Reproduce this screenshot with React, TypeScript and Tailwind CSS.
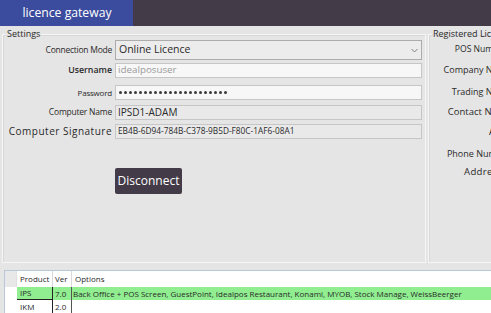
import React from "react";

const font = { fontFamily: "'Open Sans', 'Noto Sans', sans-serif" };

function Dots() {
  return (
    <span className="flex items-center">
      {Array.from({ length: 22 }).map((_, i) => (
        <span key={i} className="inline-block w-[3px] h-[3px] rounded-full bg-[#3a3a3a] mr-[2px]" />
      ))}
    </span>
  );
}

export default function App() {
  return (
    <div className="w-[491px] h-[313px] overflow-hidden bg-[#e5e5e5] text-[#2a2a2a]" style={font}>
      <div className="flex h-[26px]">
        <div className="w-[133px] shrink-0 bg-[#3b4b9d] text-white text-[12.2px] flex items-center justify-center pl-[1px]">licence gateway</div>
        <div className="flex-1 bg-[#433b47]" />
      </div>
      <div className="flex pt-[2px] h-[237px]">
        <fieldset className="ml-[2px] w-[424px] border border-[#f6f6f6] shadow-[inset_1px_1px_0_#d8d8d8] shrink-0">
          <legend className="ml-[3px] px-[1px] text-[9px] leading-[12px]">Settings</legend>
          <div className="flex flex-col">
            <div className="flex items-center h-[20px]">
              <div className="w-[109px] shrink-0 text-right text-[8.5px] tracking-[-0.25px] whitespace-nowrap">Connection Mode</div>
              <div className="ml-[3px] w-[307px] h-[20px] bg-[#ececec] border border-[#acacac] flex items-center justify-between pl-[3px] pr-[3px] text-[10.5px]">
                <span>Online Licence</span>
                <svg width="7" height="5" viewBox="0 0 7 5"><path d="M0.5 1 L3.5 4 L6.5 1" fill="none" stroke="#808080" strokeWidth="1" /></svg>
              </div>
            </div>
            <div className="flex items-center h-[15px] mt-[3px]">
              <div className="w-[109px] shrink-0 text-right text-[8.8px] font-semibold">Username</div>
              <div className="ml-[3px] w-[307px] h-[15px] bg-[#f7f7f7] border border-[#c6c6c6] flex items-center pl-[2px] text-[9.8px] text-[#9b9b9b]">idealposuser</div>
            </div>
            <div className="flex items-center h-[15px] mt-[7px]">
              <div className="w-[109px] shrink-0 text-right text-[8px] tracking-[-0.2px]">Password</div>
              <div className="ml-[3px] w-[307px] h-[15px] bg-[#f7f7f7] border border-[#c6c6c6] flex items-center pl-[3px]"><Dots /></div>
            </div>
            <div className="flex items-center h-[15px] mt-[5px]">
              <div className="w-[109px] shrink-0 text-right text-[8.5px] tracking-[-0.22px] whitespace-nowrap">Computer Name</div>
              <div className="ml-[3px] w-[307px] h-[15px] bg-[#e9e9e9] border border-[#c6c6c6] flex items-center pl-[2px] text-[10px]">IPSD1-ADAM</div>
            </div>
            <div className="flex items-center h-[15px] mt-[4px]">
              <div className="w-[109px] shrink-0 text-right text-[10px] tracking-[0.5px] whitespace-nowrap">Computer Signature</div>
              <div className="ml-[3px] w-[307px] h-[15px] bg-[#e9e9e9] border border-[#c6c6c6] flex items-center pl-[2px] text-[8.3px]">EB4B-6D94-784B-C378-9B5D-F80C-1AF6-08A1</div>
            </div>
            <div className="flex mt-[29px] pl-[112px]">
              <button className="w-[67px] h-[26px] bg-[#433b47] rounded-[2px] text-white text-[12px] flex items-center justify-center">Disconnect</button>
            </div>
          </div>
        </fieldset>
        <fieldset className="ml-[2px] w-[120px] border border-[#f6f6f6] shadow-[inset_1px_1px_0_#d8d8d8] shrink-0">
          <legend className="ml-[3px] px-[1px] text-[9px] leading-[12px] whitespace-nowrap">Registered Licence</legend>
          <div className="flex flex-col w-[82px] items-end text-[9px] leading-[12px] whitespace-nowrap">
            <div className="mt-[3px] text-[8.6px]">POS Numbers</div>
            <div className="mt-[9px]">Company Name</div>
            <div className="mt-[10px]">Trading Name</div>
            <div className="mt-[8px] text-[9.5px]">Contact Name</div>
            <div className="mt-[7px] text-[10px] tracking-[0.6px]">ABN</div>
            <div className="mt-[11px]">Phone Number</div>
            <div className="mt-[6px] text-[9.6px] tracking-[0.3px]">Address 1</div>
          </div>
        </fieldset>
      </div>
      <div className="mt-[7px] ml-[4px] h-[50px] bg-white border-t border-l border-[#b9c8d8] text-[8px]">
        <div className="flex h-[16px] items-center">
          <div className="w-[12px] shrink-0 h-full bg-[#e8e8e8] border-r border-[#e0e0e0]" />
          <div className="w-[36px] shrink-0 h-full border-r border-[#d8d8d8] flex items-center pl-[3px]">Product</div>
          <div className="w-[19px] shrink-0 h-full border-r border-[#d8d8d8] flex items-center pl-[2px]">Ver</div>
          <div className="flex-1 h-full flex items-center pl-[3px]">Options</div>
        </div>
        <div className="flex h-[13px] items-center">
          <div className="w-[12px] shrink-0 h-full" />
          <div className="flex-1 h-full bg-[#90ee90] flex">
            <div className="w-[36px] shrink-0 h-full border-r border-b border-[#222] flex items-center pl-[3px]">IPS</div>
            <div className="w-[19px] shrink-0 h-full border-r border-[#555] flex items-center pl-[2px]">7.0</div>
            <div className="flex-1 h-full flex items-center pl-[1px] whitespace-nowrap">Back Office + POS Screen, GuestPoint, Idealpos Restaurant, Konami, MYOB, Stock Manage, WeissBeerger</div>
          </div>
        </div>
        <div className="flex h-[14px] items-center">
          <div className="w-[12px] shrink-0 h-full" />
          <div className="w-[36px] shrink-0 h-full border-r border-[#222] flex items-center pl-[3px]">IKM</div>
          <div className="w-[19px] shrink-0 h-full border-r border-[#555] flex items-center pl-[2px]">2.0</div>
          <div className="flex-1" />
        </div>
      </div>
    </div>
  );
}
